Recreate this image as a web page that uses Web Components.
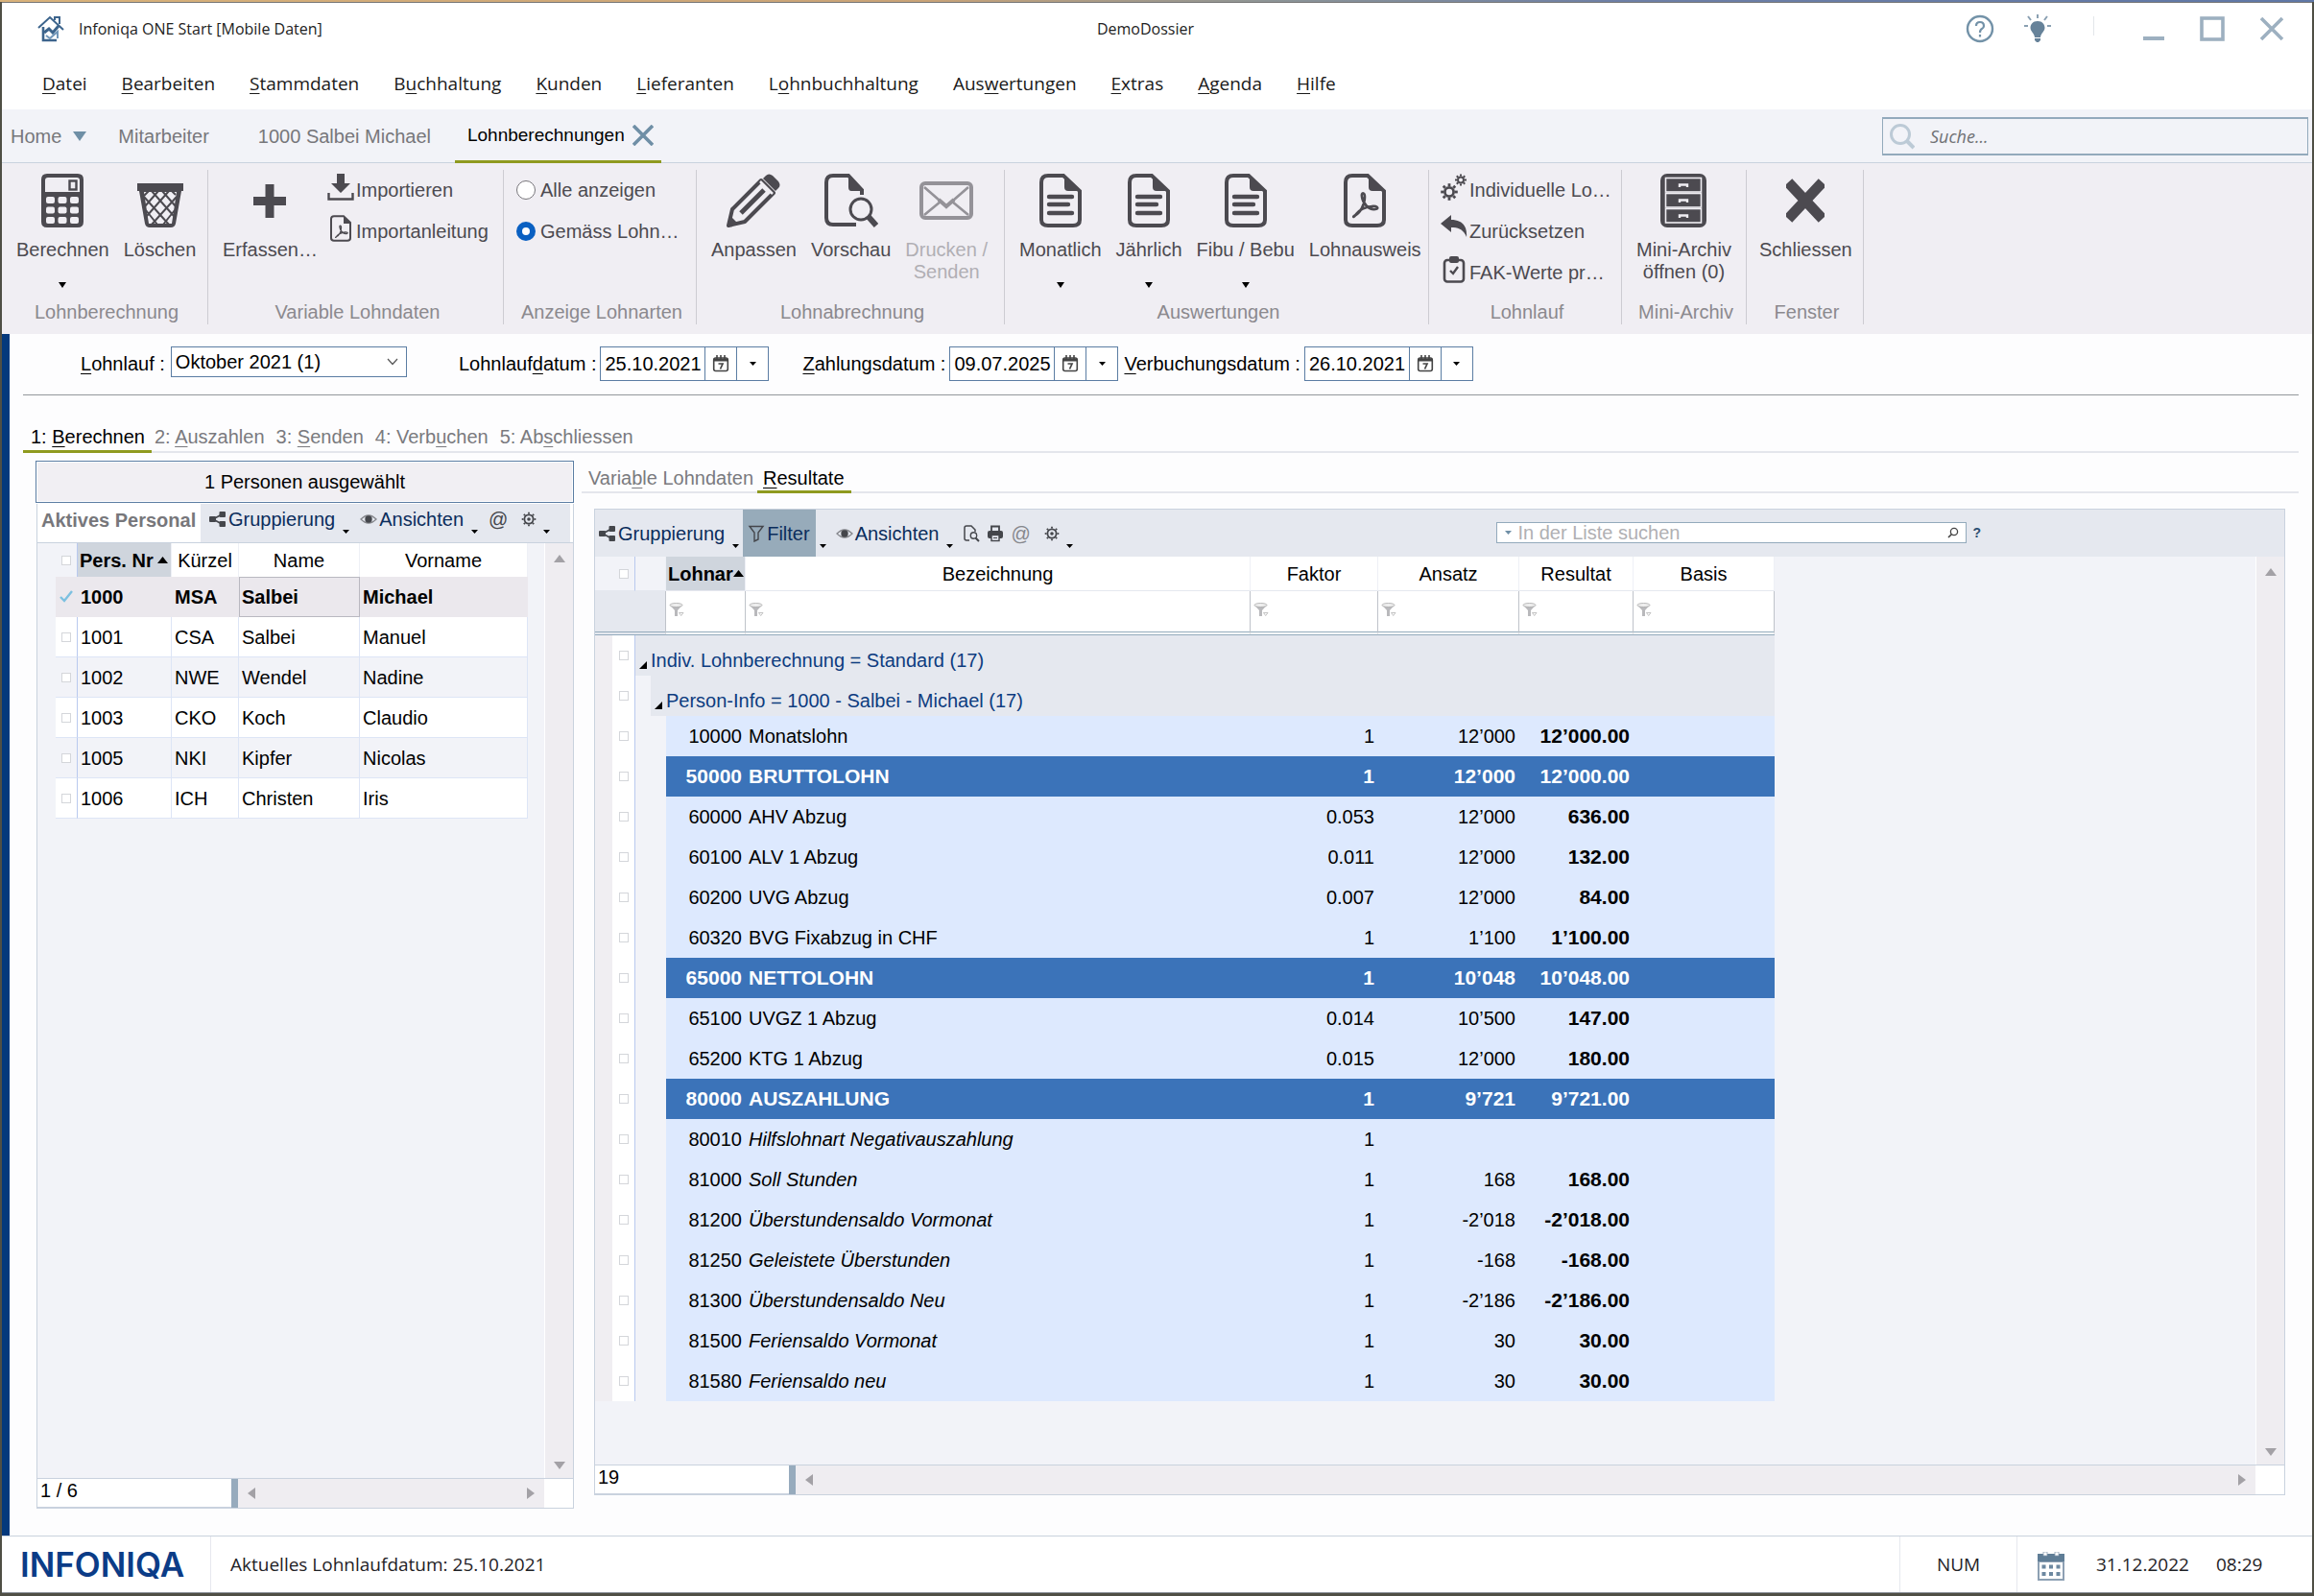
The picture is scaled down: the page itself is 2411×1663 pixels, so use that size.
<!DOCTYPE html>
<html lang="de">
<head>
<meta charset="utf-8">
<title>Infoniqa ONE Start</title>
<style>
  html, body { margin: 0; height: 100%; }
  body {
    box-sizing: border-box;
    padding: 2px 2px 3px;
    background: linear-gradient(90deg, #d9b27a 0, #c9a377 40%, #8c9496 55%, #6d7fa6 70%, #5f77a6 100%) top / 100% 2px no-repeat, #4f4f45;
    font-family: "Liberation Sans", Arial, sans-serif;
    font-size: 20px;
    line-height: 24px;
    color: #000;
    --ui: "Open Sans", "Noto Sans", sans-serif;
    --blue: #04397c;
    --olive: #8f9a1f;
    --line: #c9d2de;
    --bar: #e5e8ef;
    --pale: #f2f3f8;
    --ribbon: #f0eef3;
    --ink: #4c4a50;
  }
</style>
</head>
<body>
<app-window></app-window>

<script>
const base = `
  *, *::before, *::after { box-sizing: border-box; }
  button, input, select { font: inherit; color: inherit; margin: 0; padding: 0; border: 0; background: none; border-radius: 0; outline: 0; }
  button { cursor: default; white-space: nowrap; }
  a { color: inherit; text-decoration: none; }
  svg { display: block; }
  u { text-decoration-thickness: 1px; text-underline-offset: 3px; }
`;
function define(name, css, markup) {
  customElements.define(name, class extends HTMLElement {
    connectedCallback() {
      if (this.shadowRoot) return;
      const t = document.createElement('template');
      t.innerHTML = `<style>${base}${css}</style>${typeof markup === 'function' ? markup(this) : markup}`;
      this.attachShadow({ mode: 'open' }).appendChild(t.content.cloneNode(true));
    }
  });
}

/* ---------- icons ---------- */
const page = (inner) => `<path d="M9 2H25L42 18V48Q42 54 35 54H9Q2 54 2 48V9Q2 2 9 2Z" fill="none" stroke="currentColor" stroke-width="4"/><path d="M26 1L43 18H30Q26 18 26 14Z" fill="currentColor"/>${inner}`;
const acro = (x, y, s) => `<path transform="translate(${x} ${y}) scale(${s})" d="M2 24C8 21 13 13 13 4C13 -1 9 -1 10 4C11 11 17 18 24 17C29 16 25 13 20 14C12 15 8 17 4 22C2 26 0 25 2 24Z" fill="none" stroke="currentColor" stroke-width="2.6"/>`;
const gear = (cx, cy, r, w, n = 8) => {
  let teeth = '';
  for (let i = 0; i < n; i++) teeth += `<path d="M${cx} ${cy - r}V${cy - r - w}" transform="rotate(${i * 360 / n} ${cx} ${cy})" stroke="currentColor" stroke-width="${w}"/>`;
  return `<circle cx="${cx}" cy="${cy}" r="${r - w / 2}" fill="none" stroke="currentColor" stroke-width="${w}"/>${teeth}`;
};
const icons = {
  house: [28, 28, `<g fill="none" stroke="#3c648c" stroke-width="2"><path d="M1 13L13 2L27 15M18 5V2H23V9"/><path d="M6 12V26H20" stroke-width="2.6"/><path d="M7 18L12 14L16 18L22 11" stroke-width="3"/><path d="M9 21L13 24L21 17V24" stroke="#6f95b8"/></g>`],
  help: [30, 30, `<circle cx="15" cy="15" r="13" fill="none" stroke="#7392a8" stroke-width="2.4"/><path d="M11 12Q11 8 15 8T19 12Q19 14 17 15T15 19M15 21V23.5" fill="none" stroke="#7392a8" stroke-width="2.2"/>`],
  bulb: [28, 30, `<path d="M14 7C19 7 21.500 10.500 21.500 14C21.500 18 17.500 19 17 24H11C10.500 19 6.500 18 6.500 14C6.500 10.500 9 7 14 7ZM11 25H17V27L15 29H13L11 27Z" fill="#668299"/><path d="M14 0V4M4 2L7 6M24 2L21 6M0 12H4M24 12H28" stroke="#8aa0b2" stroke-width="2"/>`],
  min: [24, 30, `<path d="M1 25H23" stroke="#9db0c0" stroke-width="4"/>`],
  max: [26, 30, `<rect x="2" y="4" width="22" height="22" fill="none" stroke="#9db0c0" stroke-width="3.600"/>`],
  close: [26, 30, `<path d="M2 4L24 26M24 4L2 26" stroke="#9db0c0" stroke-width="3.600"/>`],
  tabx: [22, 22, `<path d="M1 1L21 21M21 1L1 21" stroke="#6f8fa6" stroke-width="3.600"/>`],
  lens: [27, 28, `<circle cx="12" cy="12" r="9.500" fill="none" stroke="#bccad6" stroke-width="3"/><path d="M19 19L26 26" stroke="#bccad6" stroke-width="4"/>`],
  calc: [44, 56, `<path fill-rule="evenodd" fill="currentColor" d="M6 0H38Q44 0 44 6V50Q44 56 38 56H6Q0 56 0 50V6Q0 0 6 0ZM7 4Q4 4 4 7V19H40V7Q40 4 37 4Z"/><rect x="29.500" y="7.500" width="7" height="9" fill="none" stroke="currentColor" stroke-width="2.400"/><g fill="#f0eef3">${[24, 34.5, 45].map(y => [5, 17.500, 30].map(x => `<rect x="${x}" y="${y}" width="9" height="7" rx="2"/>`).join('')).join('')}</g>`],
  trash: [50, 56, `<path d="M1 10H49V18H47L41 52Q40 56 36 56H14Q10 56 9 52L3 18H1Z" fill="currentColor"/><path d="M8 19L13 52H37L42 19Z" fill="#f0eef3"/><g stroke="currentColor" stroke-width="2" fill="none"><path d="M8 24L34 53M16 18L39 44M27 18L41 34M37 18L41 22M10 38L22 53M42 24L16 53M34 18L11 44M23 18L9 34M13 18L8 23M40 38L28 53"/></g>`],
  plus: [34, 56, `<path d="M17 11V46M0 28.500H34" stroke="currentColor" stroke-width="9"/>`],
  cross: [40, 56, `<path d="M6 13L34 43M34 13L6 43" stroke="currentColor" stroke-width="11" stroke-linecap="square" stroke-linejoin="round"/>`],
  pencil: [56, 56, `<path d="M2 54L6 37L36 7L49 20L19 50Z" fill="none" stroke="currentColor" stroke-width="4" stroke-linejoin="round"/><path d="M15 41L39 17" stroke="currentColor" stroke-width="5"/><path d="M38 5L41 2Q44 -1 48 2L54 8Q57 12 54 15L51 18Z" fill="currentColor"/><path d="M35 8L48 21" stroke="#f0eef3" stroke-width="2.500"/><path d="M1 55L4 44L12 52Z" fill="currentColor"/>`],
  preview: [56, 56, `<path d="M33 53H9Q2 53 2 46V9Q2 2 9 2H25L39 17V22" fill="none" stroke="currentColor" stroke-width="4"/><path d="M25 1L40 18H28Q25 18 25 14Z" fill="currentColor"/><circle cx="38" cy="37" r="11" fill="none" stroke="currentColor" stroke-width="3"/><path d="M46 45L54 54" stroke="currentColor" stroke-width="6"/>`],
  mail: [56, 56, `<rect x="2" y="10" width="52" height="36" rx="4" fill="none" stroke="#949298" stroke-width="4"/><path d="M5 14L28 34L51 14M5 43L22 29M51 43L34 29" fill="none" stroke="#949298" stroke-width="2.600"/><path d="M20 27L28 34L36 27" fill="none" stroke="#949298" stroke-width="4"/>`],
  doc: [44, 56, page(`<path d="M10 24H34M10 32H30M10 41H34" stroke="currentColor" stroke-width="4.400" stroke-linecap="round"/>`)],
  pdf: [44, 56, page(acro(9, 20, 1))],
  cabinet: [48, 56, `<rect width="48" height="56" rx="7" fill="currentColor"/><g fill="none" stroke="#f0eef3" stroke-width="1.600"><rect x="5.500" y="4.500" width="37" height="14.500"/><rect x="5.500" y="20.500" width="37" height="14.500"/><rect x="5.500" y="36.500" width="37" height="14.500"/></g><g fill="none" stroke="#f0eef3" stroke-width="2.400"><path d="M20 14V11.500H28V14M20 30V27.500H28V30M20 46V43.500H28V46"/></g>`],
  import: [28, 28, `<path d="M10 0H18V10H24L14 20L4 10H10Z" fill="currentColor"/><path d="M1.500 20V26.500H26.500V20" fill="none" stroke="currentColor" stroke-width="2.400"/>`],
  pdfs: [28, 28, `<path d="M7 1.200H17L24 8V24Q24 26.800 21 26.800H7Q4 26.800 4 24V4Q4 1.200 7 1.200Z" fill="none" stroke="currentColor" stroke-width="2"/><path d="M17 1L25 9H17Z" fill="currentColor"/>${acro(8, 11, .5)}`],
  gears: [28, 28, `${gear(9, 19, 6, 2.800)}${gear(21, 6.500, 4, 2)}`],
  undo: [28, 28, `<path d="M0 9L11 0V5C22 5 28 11 27 23C24 16 20 13 11 13V18Z" fill="currentColor"/>`],
  clip: [28, 28, `<rect x="4" y="4" width="20" height="22.500" rx="3" fill="none" stroke="currentColor" stroke-width="2.600"/><rect x="9" y="0" width="10" height="7" rx="2" fill="currentColor"/><path d="M10 15L13 18L18 11" fill="none" stroke="currentColor" stroke-width="2.400"/>`],
  share: [18, 18, `<path d="M4 9L14 3.500M4 9L14 14.500" stroke="currentColor" stroke-width="1.600"/><rect x="0" y="6" width="7" height="6" rx="1" fill="currentColor"/><rect x="10.500" y="1" width="6.500" height="6" rx="1" fill="currentColor"/><rect x="10.500" y="11" width="6.500" height="6" rx="1" fill="currentColor"/>`],
  eye: [18, 18, `<path d="M1 9Q9 1 17 9Q9 17 1 9Z" fill="none" stroke="#85878c" stroke-width="1.300"/><circle cx="9" cy="9" r="3.700" fill="currentColor"/>`],
  funnel: [18, 18, `<path d="M2 1.500H16L11 8V15L7 17V8Z" fill="none" stroke="currentColor" stroke-width="1.400"/>`],
  gear: [18, 18, `${gear(9, 9, 5.500, 1.800)}<circle cx="9" cy="9" r="1.800" fill="currentColor"/>`],
  find: [18, 18, `<path d="M7 16H4Q2 16 2 14V3Q2 1 4 1H9L13 5V7" fill="none" stroke="currentColor" stroke-width="1.500"/><circle cx="11.500" cy="11" r="3.200" fill="none" stroke="currentColor" stroke-width="1.400"/><path d="M13.500 13.500L17 17" stroke="currentColor" stroke-width="2"/>`],
  print: [18, 18, `<path d="M5 6V1.500H13V6" fill="none" stroke="currentColor" stroke-width="1.800"/><rect x="1" y="6" width="16" height="8" rx="2" fill="currentColor"/><rect x="5" y="10.500" width="8" height="6" fill="#e5e8ef" stroke="currentColor" stroke-width="1.400"/><path d="M7 13.500H11" stroke="currentColor"/>`],
  cal: [18, 18, `<rect x="1.700" y="3" width="14.600" height="13.500" rx="2" fill="none" stroke="currentColor" stroke-width="1.600"/><path d="M2 5H16" stroke="currentColor" stroke-width="3"/><path d="M5 0V5M9 0V4M13 0V5" stroke="currentColor" stroke-width="1.600"/><path d="M6.500 9H11L8.500 14.500" fill="none" stroke="currentColor" stroke-width="1.700"/>`],
  calendar: [28, 30, `<path d="M0 2H28V30H0Z" fill="#8da0b3"/><path d="M0 2H28V10H0Z" fill="#5f7d96"/><rect x="2" y="11" width="24" height="17" fill="#fff"/><path d="M6 0h4v4h-4zM18 0h4v4h-4z" fill="#fff" stroke="#8da0b3" stroke-width=".8"/><g fill="#6c88a0">${[13.500, 21].map(y => [4.500, 12, 19.500].map(x => `<rect x="${x}" y="${y}" width="4" height="4"/>`).join('')).join('')}</g>`],
  down: [8, 8, `<path d="M0 1H8L4 7Z" fill="currentColor"/>`],
  caret: [7, 4, `<path d="M0 0H7L3.500 4Z" fill="currentColor"/>`],
  tabdown: [14, 10, `<path d="M0 0H14L7 10Z" fill="#6f8fa6"/>`],
  chevron: [12, 8, `<path d="M1 1L6 6.500L11 1" fill="none" stroke="#555" stroke-width="1.200"/>`],
  sort: [11, 7, `<path d="M0 7H11L5.500 0Z" fill="#000"/>`],
  fold: [8, 8, `<path d="M8 0V8H0Z" fill="#000"/>`],
  tri: [12, 8, `<path d="M0 0H12L6 8Z" fill="#a3a1a6"/>`],
  cfilter: [16, 15, `<path d="M1 2.500L6 8V14H9V8L14 2.500Z" fill="#b9b9bc"/><ellipse cx="7.500" cy="2.500" rx="6.500" ry="2" fill="#efefef" stroke="#aaa" stroke-width=".8"/><path d="M10.500 10.500H15L12.700 13.500Z" fill="#fff" stroke="#aaa" stroke-width=".7"/>`],
  glass: [12, 12, `<circle cx="7" cy="5" r="3.600" fill="none" stroke="#444" stroke-width="1.300"/><path d="M4.500 7.500L1 11" stroke="#444" stroke-width="1.600"/>`],
  tick: [14, 13, `<path d="M1 7L5 11L13 1" fill="none" stroke="#7cc0e0" stroke-width="2.400"/>`]
};
define('ui-icon', `:host { display: block; flex: none; }`, el => {
  const [w, h, body] = icons[el.getAttribute('name')];
  return `<svg width="${w}" height="${h}" viewBox="0 0 ${w} ${h}" aria-hidden="true">${body}</svg>`;
});

/* ---------- window frame ---------- */
define('app-window', `
  :host { display: flex; flex-direction: column; height: 100%; background: #fff; }
  main { flex: 1; min-height: 0; display: flex; flex-direction: column; border-left: 8px solid var(--blue); padding: 0 14px; background: #fdfdfe; }
  .panes { flex: 1; min-height: 0; display: flex; gap: 8px; padding-left: 13px; }
  person-panel { flex: 0 0 561px; }
  result-panel { flex: 1; min-width: 0; }
`, `
  <title-bar></title-bar><menu-bar></menu-bar><tab-strip></tab-strip><ribbon-bar></ribbon-bar>
  <main><run-form></run-form><step-tabs></step-tabs>
    <div class="panes"><person-panel></person-panel><result-panel></result-panel></div>
  </main>
  <status-bar></status-bar>`);

define('title-bar', `
  :host { display: grid; grid-template-columns: 1fr auto 1fr; align-items: center; height: 54px; padding: 0 29px 0 37px; font: 16px/24px var(--ui); color: #222; border-top: 1px solid #777; }
  .left, .right { display: flex; align-items: center; }
  .left { gap: 15px; } .right { justify-content: flex-end; gap: 36px; }
  .doc { padding-right: 32px; }
  .help { margin-right: -5px; }
  i { width: 1px; height: 20px; background: #e3e6ea; margin: 0 14px 6px 8px; }
`, `<div class="left"><ui-icon name="house"></ui-icon><span>Infoniqa ONE Start [Mobile Daten]</span></div>
  <span class="doc">DemoDossier</span>
  <div class="right"><button class="help" aria-label="Hilfe"><ui-icon name="help"></ui-icon></button><button aria-label="Tipps"><ui-icon name="bulb"></ui-icon></button><i></i>
  <button aria-label="Minimieren"><ui-icon name="min"></ui-icon></button><button aria-label="Maximieren"><ui-icon name="max"></ui-icon></button><button aria-label="Fenster schliessen"><ui-icon name="close"></ui-icon></button></div>`);

define('menu-bar', `
  :host { display: block; height: 58px; font: 19px/24px var(--ui); color: #1a1a1a; }
  nav { display: flex; gap: 36px; padding: 19px 42px 0; }
`, `<nav>${['_Datei', '_Bearbeiten', '_Stammdaten', 'B_uchhaltung', '_Kunden', '_Lieferanten', 'L_ohnbuchhaltung', 'Aus_wertungen', '_Extras', '_Agenda', '_Hilfe']
  .map(t => `<button>${t.replace(/_(.)/, '<u>$1</u>')}</button>`).join('')}</nav>`);

define('tab-strip', `
  :host { display: flex; height: 56px; background: var(--pale); border-bottom: 1px solid var(--line); color: #77777b; }
  nav { display: flex; flex: 1; }
  a { display: flex; align-items: center; gap: 12px; padding: 0 25px 0 26px; height: 56px; }
  a.home { padding: 0 7px 0 9px; }
  a.on { color: #000; padding: 0 8px 0 13px; gap: 8px; border-bottom: 3px solid var(--olive); font-size: 19px; }
  label { display: flex; align-items: center; gap: 16px; width: 444px; height: 40px; margin: 8px 4px 0 0; padding-left: 6px; border: 1px solid #93aabc; border-width: 2px 1px; }
  input { flex: 1; min-width: 0; font: italic 18px/24px var(--ui); }
  input::placeholder { color: #6f7174; opacity: 1; }
`, `<nav><a href="#" class="home">Home <ui-icon name="tabdown"></ui-icon></a><a href="#">Mitarbeiter</a><a href="#">1000 Salbei Michael</a><a href="#" class="on">Lohnberechnungen <ui-icon name="tabx"></ui-icon></a></nav>
  <label><ui-icon name="lens"></ui-icon><input type="search" placeholder="Suche..." aria-label="Suche"></label>`);

/* ---------- ribbon ---------- */
define('ribbon-group', `
  :host { display: flex; flex-direction: column; border-right: 1px solid #cdccd2; height: 161px; padding-top: 4px; }
  .body { display: flex; height: 132px; gap: var(--gap, 15px); padding-left: var(--pad, 15px); }
  .name { text-align: center; color: #8b898e; padding-left: 4px; }
`, el => `<div class="body"><slot></slot></div><div class="name">${el.getAttribute('label')}</div>`);

define('ribbon-button', `
  :host { display: block; color: var(--ink); }
  button { display: flex; flex-direction: column; align-items: center; height: 120px; line-height: 23px; }
  span { margin-top: 12px; }
  button[disabled] { color: #b1afb4; }
  .arrow { margin-top: auto; color: #000; }
`, el => `<button ${el.hasAttribute('disabled') ? 'disabled' : ''}><ui-icon name="${el.getAttribute('icon')}"></ui-icon><span><slot></slot></span>${el.hasAttribute('menu') ? '<ui-icon class="arrow" name="down"></ui-icon>' : ''}</button>`);

define('ribbon-item', `
  :host { display: block; color: var(--ink); }
  button { display: flex; align-items: flex-start; gap: 2px; height: 28px; line-height: 34px; }
`, el => `<button><ui-icon name="${el.getAttribute('icon')}"></ui-icon><slot></slot></button>`);

define('ribbon-radios', `
  :host { display: flex; flex-direction: column; gap: 15px; padding-top: 3px; color: var(--ink); }
  label { display: flex; align-items: center; gap: 5px; height: 28px; white-space: nowrap; }
  input { appearance: none; width: 20px; height: 20px; border: 1px solid #77757a; border-radius: 50%; background: #fff; }
  input:checked { border: 6px solid #0a60c2; }
`, `<label><input type="radio" name="show">Alle anzeigen</label><label><input type="radio" name="show" checked>Gemäss Lohn…</label>`);

define('ribbon-bar', `
  :host { display: flex; background: var(--ribbon); height: 178px; padding-top: 7px; }
  ribbon-group { flex: none; }
  .stack { display: flex; flex-direction: column; gap: 15px; }
`, `
  <ribbon-group label="Lohnberechnung" style="width:215px"><ribbon-button icon="calc" menu>Berechnen</ribbon-button><ribbon-button icon="trash">Löschen</ribbon-button></ribbon-group>
  <ribbon-group label="Variable Lohndaten" style="width:308px;--gap:10px"><ribbon-button icon="plus">Erfassen…</ribbon-button><div class="stack"><ribbon-item icon="import">Importieren</ribbon-item><ribbon-item icon="pdfs">Importanleitung</ribbon-item></div></ribbon-group>
  <ribbon-group label="Anzeige Lohnarten" style="width:201px;--pad:13px"><ribbon-radios></ribbon-radios></ribbon-group>
  <ribbon-group label="Lohnabrechnung" style="width:321px"><ribbon-button icon="pencil">Anpassen</ribbon-button><ribbon-button icon="preview">Vorschau</ribbon-button><ribbon-button icon="mail" disabled>Drucken /<br>Senden</ribbon-button></ribbon-group>
  <ribbon-group label="Auswertungen" style="width:442px"><ribbon-button icon="doc" menu>Monatlich</ribbon-button><ribbon-button icon="doc" menu>Jährlich</ribbon-button><ribbon-button icon="doc" menu>Fibu / Bebu</ribbon-button><ribbon-button icon="pdf">Lohnausweis</ribbon-button></ribbon-group>
  <ribbon-group label="Lohnlauf" style="width:201px;--pad:12px"><div class="stack"><ribbon-item icon="gears">Individuelle Lo…</ribbon-item><ribbon-item icon="undo">Zurücksetzen</ribbon-item><ribbon-item icon="clip">FAK-Werte pr…</ribbon-item></div></ribbon-group>
  <ribbon-group label="Mini-Archiv" style="width:130px"><ribbon-button icon="cabinet">Mini-Archiv<br>öffnen (0)</ribbon-button></ribbon-group>
  <ribbon-group label="Fenster" style="width:122px;--pad:13px"><ribbon-button icon="cross">Schliessen</ribbon-button></ribbon-group>`);

/* ---------- run form ---------- */
define('date-field', `
  :host { display: flex; gap: 4px; align-items: center; }
  div { display: flex; height: 36px; width: 176px; border: 1px solid #5b7da3; background: #fff; }
  input { width: 108px; padding-left: 4px; }
  button { display: grid; place-items: center; width: 33px; border-left: 1px solid #5b7da3; color: #444; }
  button.arrow { color: #000; }
`, el => `<label for="d">${el.getAttribute('label').replace(/_(.)/, '<u>$1</u>')}</label>
  <div><input id="d" value="${el.getAttribute('value')}"><button aria-label="Kalender"><ui-icon name="cal"></ui-icon></button><button class="arrow" aria-label="Auswahl"><ui-icon name="caret"></ui-icon></button></div>`);

define('run-form', `
  :host { display: flex; align-items: flex-start; height: 64px; padding: 13px 0 0 60px; border-bottom: 1px solid #93979c; }
  .run { display: flex; gap: 6px; align-items: flex-start; width: 394px; }
  .run label { padding-top: 6px; }
  .box { display: grid; align-items: center; width: 246px; height: 32px; border: 1px solid #5b7da3; background: #fff; }
  .box > * { grid-area: 1 / 1; }
  select { appearance: none; height: 30px; padding-left: 4px; }
  .box ui-icon { justify-self: end; margin-right: 8px; pointer-events: none; }
  .pay { margin-left: 35px; } .book { margin-left: 6px; }
`, `<div class="run"><label for="r"><u>L</u>ohnlauf :</label><div class="box"><select id="r"><option>Oktober 2021 (1)</option></select><ui-icon name="chevron"></ui-icon></div></div>
  <date-field label="Lohnlauf_datum :" value="25.10.2021"></date-field>
  <date-field class="pay" label="_Zahlungsdatum :" value="09.07.2025"></date-field>
  <date-field class="book" label="_Verbuchungsdatum :" value="26.10.2021"></date-field>`);

define('step-tabs', `
  :host { display: block; padding-top: 28px; height: 60px; color: #7a7a7e; }
  nav { display: flex; height: 32px; border-bottom: 2px solid #e4e6ec; }
  a { padding: 3px 4px 0 8px; height: 32px; }
  a.on { color: #000; border-bottom: 3px solid var(--olive); padding: 3px 7px 0 8px; }
  a.on + a { padding-left: 3px; }
`, `<nav><a href="#" class="on">1: <u>B</u>erechnen</a><a href="#">2: <u>A</u>uszahlen</a><a href="#">3: <u>S</u>enden</a><a href="#">4: Verb<u>u</u>chen</a><a href="#">5: Ab<u>s</u>chliessen</a></nav>`);

/* ---------- grid parts ---------- */
define('tool-button', `
  :host { display: flex; color: #0b2d5c; }
  button { display: flex; align-items: center; gap: 2px; padding-bottom: var(--lift, 0); }
  ui-icon { color: #44464b; }
  .arrow { align-self: flex-end; color: #000; margin: 0 0 9px 8px; }
  :host([on]) button { background: #97abba; padding: 0 6px 0 5px; }
  :host([on]) .arrow { margin-left: 4px; }
  :host([small]) .arrow { margin-left: 6px; }
`, el => `<button>${el.hasAttribute('icon') ? `<ui-icon name="${el.getAttribute('icon')}"></ui-icon>` : ''}<slot></slot></button>${el.hasAttribute('menu') ? '<ui-icon class="arrow" name="caret"></ui-icon>' : ''}`);

define('scroll-bar', `
  :host { display: flex; justify-content: space-between; align-items: center; background: #efedf1; padding: 0 8px; }
  :host([vertical]) { flex-direction: column; padding: 12px 0 9px; width: 30px; border-left: 1px solid #fff; }
  .w { transform: rotate(90deg); } .e { transform: rotate(-90deg); } .n { transform: rotate(180deg); }
`, el => el.hasAttribute('vertical')
  ? `<button class="n" aria-label="Nach oben"><ui-icon name="tri"></ui-icon></button><button aria-label="Nach unten"><ui-icon name="tri"></ui-icon></button>`
  : `<button class="w" aria-label="Nach links"><ui-icon name="tri"></ui-icon></button><button class="e" aria-label="Nach rechts"><ui-icon name="tri"></ui-icon></button>`);

define('grid-frame', `
  :host { display: flex; flex-direction: column; min-height: 0; border: 1px solid var(--line); background: var(--pale); }
  .view { flex: 1; min-height: 0; display: flex; }
  .content { flex: 1; min-width: 0; overflow: hidden; }
  .foot { display: flex; height: 31px; border-top: 1px solid var(--line); background: #fff; }
  output { width: 202px; padding-left: 3px; border-bottom: 1px solid var(--line); }
  i { width: 7px; background: #97abbd; }
  .foot scroll-bar { flex: 1; margin: 0 30px 0 0; }
`, el => `<slot name="bar"></slot><div class="view"><div class="content"><slot></slot></div><scroll-bar vertical></scroll-bar></div>
  <div class="foot"><output>${el.getAttribute('count')}</output><i></i><scroll-bar></scroll-bar></div>`);

const gridCss = `
  table { border-collapse: separate; border-spacing: 0; table-layout: fixed; }
  th, td { padding: 0; overflow: hidden; white-space: nowrap; }
  th { font-weight: normal; background: #fff; }
  input[type=checkbox] { display: block; appearance: none; width: 10px; height: 10px; border: 1px solid #d4d6da; background: #fff; }
  .sorted { background: #cfd5dd; font-weight: bold; }
  .sorted div { display: flex; align-items: center; }
`;

const people = [['1000', 'MSA', 'Salbei', 'Michael'], ['1001', 'CSA', 'Salbei', 'Manuel'], ['1002', 'NWE', 'Wendel', 'Nadine'], ['1003', 'CKO', 'Koch', 'Claudio'], ['1005', 'NKI', 'Kipfer', 'Nicolas'], ['1006', 'ICH', 'Christen', 'Iris']];
define('person-panel', gridCss + `
  :host { display: flex; flex-direction: column; padding: 8px 0 28px; }
  .pick { height: 44px; border: 1px solid #5b7da3; box-shadow: inset 0 0 0 1px #fff; background: #f1eff3; }
  grid-frame { flex: 1; margin: 1px 0 0 1px; border-top: 0; }
  .bar { display: flex; height: 41px; background: #fff; border-bottom: 1px solid var(--line); }
  h2 { margin: 0; padding: 5px 3px 0 4px; width: 170px; font-size: 20px; line-height: 24px; color: #77777b; white-space: nowrap; }
  .tools { flex: 1; display: flex; padding-left: 9px; margin-right: 3px; background: var(--bar); --lift: 8px; }
  tool-button { height: 40px; margin-right: 11px; }
  tool-button.at { color: #44464b; margin-right: 13px; }
  table { width: 492px; margin-left: 19px; }
  th { height: 35px; border-right: 1px solid #eef0f6; }
  .sorted div { padding-left: 2px; gap: 4px; }
  td { height: 42px; padding-left: 3px; border-right: 1px solid #dde5f6; border-bottom: 1px solid #dde5f6; background: #fff; }
  tbody tr:nth-child(3) td, tbody tr:nth-child(5) td { background: var(--pale); }
  tbody tr.on td { background: #ebe8ed; font-weight: bold; border-color: #ebe8ed; }
  tbody tr.on td.focus { border: 1px solid #b9b8c0; padding-left: 2px; }
  tr > :first-child { padding-left: 6px; border-right: 1px solid #b9c9ee; }
  tbody tr.on td:first-child { padding-left: 4px; }
  th:first-child { background: var(--pale); }
`, `
  <button class="pick">1 Personen ausgewählt</button>
  <grid-frame count="1 / 6">
    <div class="bar" slot="bar"><h2>Aktives Personal</h2><div class="tools">
      <tool-button icon="share" menu>Gruppierung</tool-button><tool-button icon="eye" menu>Ansichten</tool-button><tool-button class="at">@</tool-button><tool-button icon="gear" menu small></tool-button></div></div>
    <table><colgroup><col style="width:23px"><col style="width:98px"><col style="width:70px"><col style="width:126px"><col></colgroup>
    <thead><tr><th><input type="checkbox" aria-label="Alle"></th><th class="sorted"><div><span>Pers. Nr</span><ui-icon name="sort"></ui-icon></div></th><th>Kürzel</th><th>Name</th><th>Vorname</th></tr></thead>
    <tbody>${people.map((p, i) => `<tr class="${i ? '' : 'on'}"><td>${i ? `<input type="checkbox" aria-label="${p[0]}">` : '<ui-icon name="tick"></ui-icon>'}</td>${p.map((c, j) => `<td class="${j === 2 && !i ? 'focus' : ''}">${c}</td>`).join('')}</tr>`).join('')}</tbody></table>
  </grid-frame>`);

const wages = [
  ['10000', 'Monatslohn', '1', '12’000', '12’000.00'],
  ['50000', 'BRUTTOLOHN', '1', '12’000', '12’000.00', 'sum'],
  ['60000', 'AHV Abzug', '0.053', '12’000', '636.00'],
  ['60100', 'ALV 1 Abzug', '0.011', '12’000', '132.00'],
  ['60200', 'UVG Abzug', '0.007', '12’000', '84.00'],
  ['60320', 'BVG Fixabzug in CHF', '1', '1’100', '1’100.00'],
  ['65000', 'NETTOLOHN', '1', '10’048', '10’048.00', 'sum'],
  ['65100', 'UVGZ 1 Abzug', '0.014', '10’500', '147.00'],
  ['65200', 'KTG 1 Abzug', '0.015', '12’000', '180.00'],
  ['80000', 'AUSZAHLUNG', '1', '9’721', '9’721.00', 'sum'],
  ['80010', 'Hilfslohnart Negativauszahlung', '1', '', '', 'aux'],
  ['81000', 'Soll Stunden', '1', '168', '168.00', 'aux'],
  ['81200', 'Überstundensaldo Vormonat', '1', '-2’018', '-2’018.00', 'aux'],
  ['81250', 'Geleistete Überstunden', '1', '-168', '-168.00', 'aux'],
  ['81300', 'Überstundensaldo Neu', '1', '-2’186', '-2’186.00', 'aux'],
  ['81500', 'Feriensaldo Vormonat', '1', '30', '30.00', 'aux'],
  ['81580', 'Feriensaldo neu', '1', '30', '30.00', 'aux']
];
const mark = '<td class="mark"><input type="checkbox" aria-label="Zeile"></td>';
define('result-panel', gridCss + `
  :host { display: flex; flex-direction: column; padding: 14px 0 42px; }
  nav { display: flex; height: 28px; border-bottom: 2px solid #e4e6ec; color: #7a7a7e; }
  nav a { height: 28px; padding: 0 4px 0 7px; }
  nav a.on { color: #000; padding: 0 7px 0 6px; border-bottom: 3px solid var(--olive); }
  grid-frame { flex: 1; margin: 16px 14px 0 13px; }
  .bar { display: flex; height: 49px; padding-left: 4px; background: var(--bar); }
  tool-button { height: 49px; margin-right: 4px; }
  tool-button.gap { margin-right: 10px; }
  tool-button.ic { margin-right: 7px; }
  tool-button.at { margin-right: 13px; color: #85878c; }
  .search { display: flex; align-items: center; width: 490px; height: 22px; margin: 13px 6px 0 auto; padding: 0 7px 0 8px; background: #fff; border: 1px solid #93aabc; color: #6f8fa6; }
  .search input { flex: 1; min-width: 0; height: 20px; line-height: 20px; padding-left: 6px; }
  .search input::placeholder { color: #b0b0b3; opacity: 1; }
  .q { font: bold 14px/22px "Liberation Sans", sans-serif; margin: 13px 316px 0 0; color: #2d4f72; }
  table { width: 1229px; }
  thead th { height: 36px; border-right: 1px solid #eef0f6; border-bottom: 1px solid var(--bar); }
  th.mark, th.pad { background: var(--pale); }
  .mark { padding-left: 25px; border-right: 1px solid #b9c9ee; }
  td.mark { background: linear-gradient(90deg, #f0eef2 18px, #fff 18px); }
  .sorted div { padding-left: 2px; }
  .filter td { height: 46px; padding-left: 3px; background: #fff; border-right: 1px solid #bfc3ca; border-bottom: 4px double #93aabc; }
  .filter td:first-child { background: var(--bar); }
  .filter ui-icon { margin-top: -4px; }
  tbody td { height: 42px; }
  .group td:not(.mark) { background: var(--bar); color: #0d3c80; padding-top: 9px; }
  .group div { display: flex; align-items: center; gap: 4px; padding-left: 4px; }
  .group ui-icon { margin-top: 10px; }
  .group.sub td:not(.mark) { background: linear-gradient(90deg, var(--pale) 16px, var(--bar) 16px); }
  .group.sub div { padding-left: 20px; }
  .pad { background: var(--pale); }
  .row td:not(.mark, .pad) { background: #dde9fe; text-align: right; padding-right: 4px; }
  .row td.name { text-align: left !important; padding-left: 3px; }
  .row td.res { font-weight: bold; font-size: 21px; }
  .aux .name { font-style: italic; }
  .sum td:not(.mark, .pad) { background: #3b73b9; color: #fff; font-weight: bold; font-size: 21px; }
`, `
  <nav><a href="#">Varia<u>b</u>le Lohndaten</a><a href="#" class="on"><u>R</u>esultate</a></nav>
  <grid-frame count="19">
    <div class="bar" slot="bar"><tool-button icon="share" menu>Gruppierung</tool-button><tool-button icon="funnel" menu on class="gap">Filter</tool-button><tool-button icon="eye" menu class="gap">Ansichten</tool-button>
      <tool-button class="ic" icon="find"></tool-button><tool-button class="ic" icon="print"></tool-button><tool-button class="at">@</tool-button><tool-button icon="gear" menu small></tool-button>
      <label class="search"><ui-icon name="caret"></ui-icon><input placeholder="In der Liste suchen" aria-label="In der Liste suchen"><ui-icon name="glass"></ui-icon></label><span class="q">?</span></div>
    <table><colgroup><col style="width:42px"><col style="width:32px"><col style="width:83px"><col style="width:526px"><col style="width:133px"><col style="width:147px"><col style="width:119px"><col></colgroup>
    <thead><tr><th class="mark"><input type="checkbox" aria-label="Alle"></th><th class="pad"></th><th class="sorted"><div><span>Lohnar</span><ui-icon name="sort"></ui-icon></div></th><th>Bezeichnung</th><th>Faktor</th><th>Ansatz</th><th>Resultat</th><th>Basis</th></tr></thead>
    <tbody><tr class="filter"><td colspan="2"></td>${'<td><ui-icon name="cfilter"></ui-icon></td>'.repeat(6)}</tr>
    <tr class="group">${mark}<td colspan="7"><div><ui-icon name="fold"></ui-icon>Indiv. Lohnberechnung = Standard (17)</div></td></tr>
    <tr class="group sub">${mark}<td colspan="7"><div><ui-icon name="fold"></ui-icon>Person-Info = 1000 - Salbei - Michael (17)</div></td></tr>
    ${wages.map(w => `<tr class="row ${w[5] || ''}">${mark}<td class="pad"></td><td>${w[0]}</td><td class="name">${w[1]}</td><td>${w[2]}</td><td>${w[3]}</td><td class="res">${w[4]}</td><td></td></tr>`).join('')}</tbody></table>
  </grid-frame>`);

define('status-bar', `
  :host { display: flex; align-items: center; height: 60px; border-top: 1px solid var(--line); border-bottom: 1px solid #8a9098; background: #fff; font: 19px/24px var(--ui); color: #1f2226; }
  div { display: flex; align-items: center; height: 100%; border-right: 1px solid #e6e8ee; }
  .logo { width: 218px; padding-left: 19px; font: 600 35px/36px Inter, sans-serif; color: #0b3c87; }
  .msg { flex: 1; padding-left: 20px; }
  .num { width: 122px; justify-content: center; }
  .time { border: 0; width: 307px; padding-left: 21px; gap: 28px; }
  .time ui-icon { margin: 4px 5px 0 0; }
`, `<div class="logo">INFONIQA</div><div class="msg">Aktuelles Lohnlaufdatum: 25.10.2021</div><div class="num">NUM</div><div class="time"><ui-icon name="calendar"></ui-icon><span>31.12.2022</span><span>08:29</span></div>`);
</script>
</body>
</html>
